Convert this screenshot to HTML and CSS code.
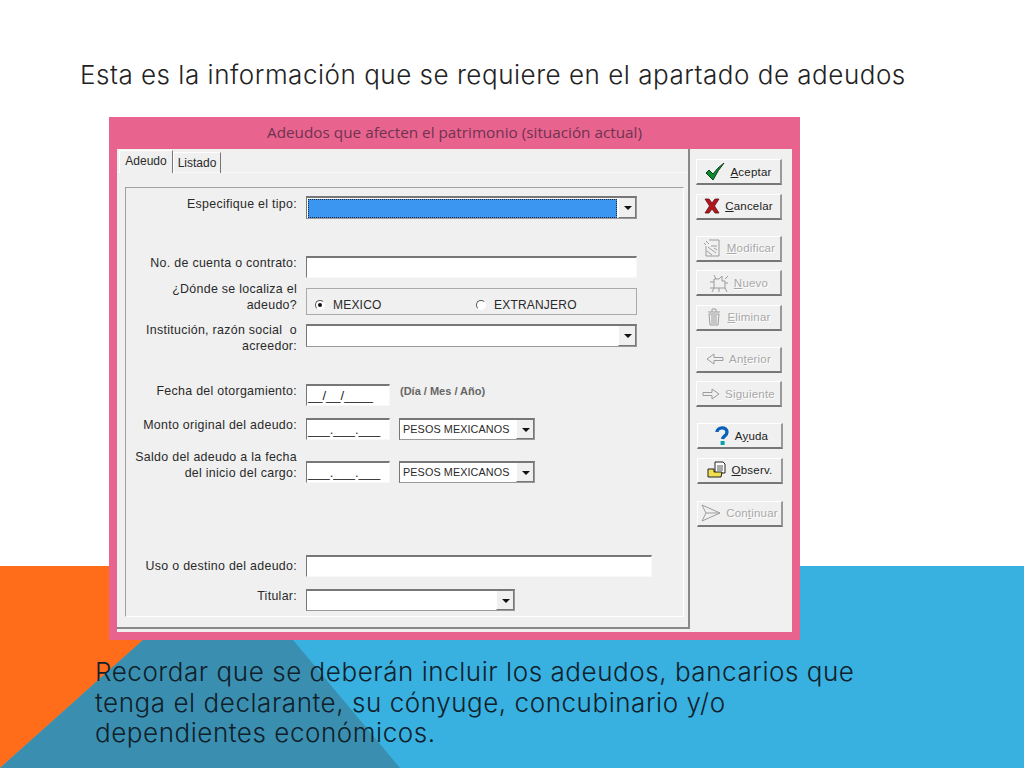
FILE: index.html
```html
<!DOCTYPE html>
<html lang="es">

<head>
    <meta charset="UTF-8">
    <title>Adeudos</title>
    <link rel="stylesheet" href="styles.css">
</head>

<body>
    <div class="slide">
        <svg class="decor" viewBox="0 0 1024 202" width="1024" height="202">
            <rect width="1024" height="202" fill="#38b0e0" />
            <polygon points="0,0 226,0 0,202" fill="#ff6d1a" />
            <polygon points="143,74 293,74 400,202 0,202" fill="#3a8fb0" />
        </svg>

        <h1 class="heading">Esta es la información que se requiere en el apartado de adeudos</h1>

        <div class="window">
            <div class="title">Adeudos que afecten el patrimonio (situación actual)</div>
            <div class="client">
                <div class="sheet">
                    <div class="tabs">
                        <div class="tab active">Adeudo</div>
                        <div class="tab">Listado</div>
                    </div>
                    <div class="panel">
                        <div class="row h23">
                            <label class="at0">Especifique el tipo:</label>
                            <div class="field combo w331 h23">
                                <div class="selected"></div>
                                <span class="drop"></span>
                            </div>
                        </div>
                        <div class="row mt37">
                            <label>No. de cuenta o contrato:</label>
                            <div class="field w331"></div>
                        </div>
                        <div class="row mt10 h26">
                            <label class="lift7">¿Dónde se localiza el<br>adeudo?</label>
                            <div class="group">
                                <div class="option"><span class="radio on"></span>MEXICO</div>
                                <div class="option"><span class="radio"></span>EXTRANJERO</div>
                            </div>
                        </div>
                        <div class="row mt10 h23">
                            <label class="lift2">Institución, razón social&nbsp; o<br>acreedor:</label>
                            <div class="field combo w331 h23"><span class="drop"></span></div>
                        </div>
                        <div class="row mt37">
                            <label>Fecha del otorgamiento:</label>
                            <div class="field mask w84">__/__/____</div>
                            <span class="hint">(Día / Mes / Año)</span>
                        </div>
                        <div class="row mt12">
                            <label>Monto original del adeudo:</label>
                            <div class="field mask w84">___.___.___</div>
                            <div class="field combo currency">PESOS MEXICANOS<span class="drop"></span></div>
                        </div>
                        <div class="row mt21">
                            <label class="lift12">Saldo del adeudo a la fecha<br>del inicio del cargo:</label>
                            <div class="field mask w84">___.___.___</div>
                            <div class="field combo currency">PESOS MEXICANOS<span class="drop"></span></div>
                        </div>
                        <div class="row mt72">
                            <label class="drop3">Uso o destino del adeudo:</label>
                            <div class="field w346"></div>
                        </div>
                        <div class="row mt12">
                            <label>Titular:</label>
                            <div class="field combo w209"><span class="drop"></span></div>
                        </div>
                    </div>
                </div>

                <div class="buttons">
                    <div class="btn-group">
                        <div class="btn">
                            <svg viewBox="0 0 20 20" width="20" height="20">
                                <path d="M1 11 L4 8 L8 12 Q12 6 19 1 Q13 8 8 18 Z" fill="#0e8a2e" stroke="#0b3d1c" stroke-width="1" />
                            </svg>
                            <span><u>A</u>ceptar</span>
                        </div>
                        <div class="btn">
                            <svg viewBox="0 0 16 16" width="16" height="16">
                                <path d="M1 1 L5 1 L8 5 L11 1 L15 1 L10.5 8 L15 15 L11 15 L8 11 L5 15 L1 15 L5.5 8 Z" fill="#b3161c" stroke="#5e1014" stroke-width="0.8" />
                            </svg>
                            <span><u>C</u>ancelar</span>
                        </div>
                    </div>
                    <div class="btn-group">
                        <div class="btn off">
                            <svg viewBox="0 0 20 20" width="20" height="20" class="dim">
                                <path d="M7 2 H17 V18 H4 V8" />
                                <path d="M4 3 L7 6 M2 5 L4 7 M6 9 L14 15 M9 8 H15 M5 13 L10 17 M12 10 L15 12" />
                            </svg>
                            <span><u>M</u>odificar</span>
                        </div>
                        <div class="btn off">
                            <svg viewBox="0 0 20 20" width="20" height="20" class="dim">
                                <path d="M5 6 H10 L13 3 V8 H16 V15 H5 Z" />
                                <path d="M5 2 L7 6 M1 9 H5 M1 15 H5 M5 15 L3 19 M16 15 L18 19 M10 15 V19 M16 6 L19 3 M16 10 H19" />
                            </svg>
                            <span><u>N</u>uevo</span>
                        </div>
                        <div class="btn off">
                            <svg viewBox="0 0 16 20" width="16" height="20" class="dim">
                                <path d="M2 5 H14 M6 5 V2 H10 V5 M3 7 H13 L12 18 H4 Z M6 8 V17 M8 8 V17 M10 8 V17" />
                            </svg>
                            <span><u>E</u>liminar</span>
                        </div>
                    </div>
                    <div class="btn-group">
                        <div class="btn off">
                            <svg viewBox="0 0 18 12" width="18" height="12" class="dim">
                                <path d="M1 6 L8 1 V4.5 H17 V7.5 H8 V11 Z" />
                            </svg>
                            <span>An<u>t</u>erior</span>
                        </div>
                        <div class="btn off">
                            <svg viewBox="0 0 18 12" width="18" height="12" class="dim">
                                <path d="M17 6 L10 1 V4.5 H1 V7.5 H10 V11 Z" />
                            </svg>
                            <span>Si<u>g</u>uiente</span>
                        </div>
                    </div>
                    <div class="btn-group shift">
                        <div class="btn wide">
                            <svg viewBox="0 0 14 20" width="14" height="20">
                                <path d="M2 6 C2 1 12 0 12 6 C12 10 8 10 7.5 13" fill="none" stroke="#0a62b8" stroke-width="3.4" />
                                <rect x="5.6" y="15" width="4" height="4" fill="#0ea0a8" />
                            </svg>
                            <span>A<u>y</u>uda</span>
                        </div>
                        <div class="btn">
                            <svg viewBox="0 0 20 18" width="20" height="18">
                                <path d="M8 1 H16 L18 3 V12 H8 Z" fill="#fff" stroke="#222" />
                                <path d="M10 5 H16 M10 7 H16 M10 9 H16" stroke="#555" />
                                <path d="M1 8 H7 V11 H15 L14 16 H1 Z" fill="#f0e050" stroke="#222" />
                            </svg>
                            <span><u>O</u>bserv.</span>
                        </div>
                    </div>
                    <div class="btn-group shift last">
                        <div class="btn off">
                            <svg viewBox="0 0 20 18" width="20" height="18" class="dim">
                                <path d="M1 1 L19 9 L1 17 L5 9 Z M5 9 H19" />
                            </svg>
                            <span>Con<u>t</u>inuar</span>
                        </div>
                    </div>
                </div>
            </div>
        </div>

        <p class="note">Recordar que se deberán incluir los adeudos, bancarios que<br>tenga el declarante, su cónyuge, concubinario y/o<br>dependientes económicos.</p>
    </div>
</body>

</html>
```
FILE: styles.css
```css
body {
    margin: 0;
    background-color: #fff;
}

.slide {
    position: relative;
    width: 1024px;
    height: 768px;
    overflow: hidden;
    padding-top: 58px;
    box-sizing: border-box;
    font-family: 'Inter', 'Liberation Sans', sans-serif;
}

.decor {
    position: absolute;
    left: 0;
    bottom: 0;
}

.heading {
    position: relative;
    margin: 0 0 0 80px;
    height: 59px;
    font-size: 26px;
    line-height: 34px;
    font-weight: 300;
    letter-spacing: 0.52px;
    color: #222;
    white-space: nowrap;
}

.window {
    position: relative;
    margin-left: 109px;
    width: 691px;
    height: 523px;
    box-sizing: border-box;
    background-color: #e8648f;
    padding: 0 8px 8px;
    display: flex;
    flex-direction: column;
    font-family: 'Liberation Sans', Arial, sans-serif;
    font-size: 12px;
    color: #2a2a2a;
}

.title {
    height: 32px;
    line-height: 31px;
    text-align: center;
    font-family: 'Open Sans', sans-serif;
    font-size: 15.3px;
    color: #6e3350;
}

.client {
    flex: 1;
    display: flex;
    background-color: #f0f0f0;
}

.sheet {
    width: 571px;
    height: 477px;
    padding-top: 1px;
    border-right: 2px solid #888;
    border-bottom: 2px solid #888;
}

.tabs {
    display: flex;
    height: 22px;
    padding-left: 2px;
    border-bottom: 1px solid #fafafa;
}

.tab {
    position: relative;
    width: 46px;
    height: 20px;
    margin-top: 2px;
    line-height: 20px;
    text-align: center;
    border-right: 1px solid #777;
    border-left: 1px solid #fff;
    border-top: 1px solid #fff;
}

.tab.active {
    width: 52px;
    margin-top: 0;
    height: 22px;
    line-height: 20px;
    background-color: #f0f0f0;
    margin-bottom: -1px;
}

.panel {
    width: 559px;
    height: 430px;
    margin: 14px 0 0 8px;
    padding-top: 8px;
    box-sizing: border-box;
    border-top: 1px solid #a0a0a0;
    border-left: 1px solid #a0a0a0;
    border-right: 1px solid #fff;
    border-bottom: 1px solid #fff;
}

.row {
    display: flex;
    align-items: flex-start;
    height: 22px;
}

.row label {
    width: 171px;
    margin-right: 9px;
    margin-top: -1px;
    flex-shrink: 0;
    text-align: right;
    font-size: 12.4px;
    line-height: 16px;
    letter-spacing: 0.3px;
}

.row label.at0 { margin-top: 0; }
.row label.lift2 { margin-top: -2px; }
.row label.lift7 { margin-top: -7px; }
.row label.lift12 { margin-top: -12px; }
.row label.drop3 { margin-top: 3px; }

.h26 { height: 26px; }
.mt10 { margin-top: 10px; }
.mt12 { margin-top: 12px; }
.mt21 { margin-top: 21px; }
.mt37 { margin-top: 37px; }
.mt72 { margin-top: 72px; }

.field {
    position: relative;
    box-sizing: border-box;
    height: 22px;
    flex-shrink: 0;
    background-color: #fff;
    border-top: 2px solid #777;
    border-left: 1px solid #777;
    border-right: 1px solid #f8f8f8;
    border-bottom: 1px solid #f8f8f8;
}

.w331 { width: 331px; }
.w346 { width: 346px; }
.w209 { width: 209px; }
.w84 { width: 84px; }
.h23 { height: 23px; }

.mask {
    font-size: 13px;
    line-height: 19px;
    padding-left: 1px;
    color: #222;
}

.combo {
    border-right-color: #999;
    border-bottom-color: #999;
}

.drop {
    position: absolute;
    top: 0;
    right: 0;
    bottom: 0;
    width: 18px;
    box-sizing: border-box;
    background-color: #f0f0f0;
    border-left: 1px solid #fff;
    border-right: 1px solid #777;
    border-bottom: 1px solid #777;
}

.drop::after {
    content: "";
    position: absolute;
    left: 5px;
    top: 8px;
    border-left: 4px solid transparent;
    border-right: 4px solid transparent;
    border-top: 4px solid #111;
}

.selected {
    height: 17px;
    margin: 1px 19px 0 1px;
    background-color: #3a96f0;
    border: 1px dotted #223;
}

.currency {
    width: 136px;
    margin-left: 9px;
    padding-left: 3px;
    font-size: 10.8px;
    line-height: 18px;
    letter-spacing: 0.1px;
}

.hint {
    margin-left: 10px;
    margin-top: -1px;
    font-size: 11px;
    font-weight: bold;
    line-height: 16px;
    color: #666;
}

.group {
    box-sizing: border-box;
    width: 331px;
    height: 27px;
    padding: 8px 0 0 8px;
    display: flex;
    border: 1px solid #aaa;
}

.option {
    display: flex;
    align-items: center;
    width: 161px;
    height: 16px;
    letter-spacing: 0.2px;
    flex-shrink: 0;
}

.radio {
    position: relative;
    box-sizing: border-box;
    width: 10px;
    height: 10px;
    margin-right: 8px;
    border-radius: 50%;
    background-color: #fff;
    border: 1px solid #fff;
    border-top-color: #555;
    border-left-color: #555;
}

.radio.on::after {
    content: "";
    position: absolute;
    left: 2px;
    top: 2px;
    width: 4px;
    height: 4px;
    border-radius: 50%;
    background-color: #111;
}

.buttons {
    margin-left: 6px;
    padding-top: 10px;
    display: flex;
    flex-direction: column;
    gap: 16px;
}

.btn-group {
    display: flex;
    flex-direction: column;
    gap: 8.5px;
}

.btn-group.shift {
    margin-left: 1px;
}

.btn-group.last {
    margin-top: 1px;
}

.btn {
    box-sizing: border-box;
    width: 86px;
    height: 26px;
    display: flex;
    align-items: center;
    justify-content: center;
    gap: 5px;
    background-color: #f0f0f0;
    border-top: 1px solid #fff;
    border-left: 1px solid #fff;
    border-right: 2px solid #999;
    border-bottom: 2px solid #777;
    font-size: 11.5px;
    letter-spacing: 0.2px;
    color: #222;
}

.btn.wide {
    gap: 6px;
    padding-left: 4px;
}

.btn.off {
    color: #a8a8a8;
    text-shadow: 1px 1px 0 #fff;
}

.dim {
    fill: none;
    stroke: #9c9c9c;
    stroke-width: 1;
}

.note {
    position: relative;
    margin: 17px 0 0 95px;
    font-size: 26px;
    line-height: 30.5px;
    font-weight: 300;
    letter-spacing: 0.55px;
    color: #10202a;
    white-space: nowrap;
}
```
